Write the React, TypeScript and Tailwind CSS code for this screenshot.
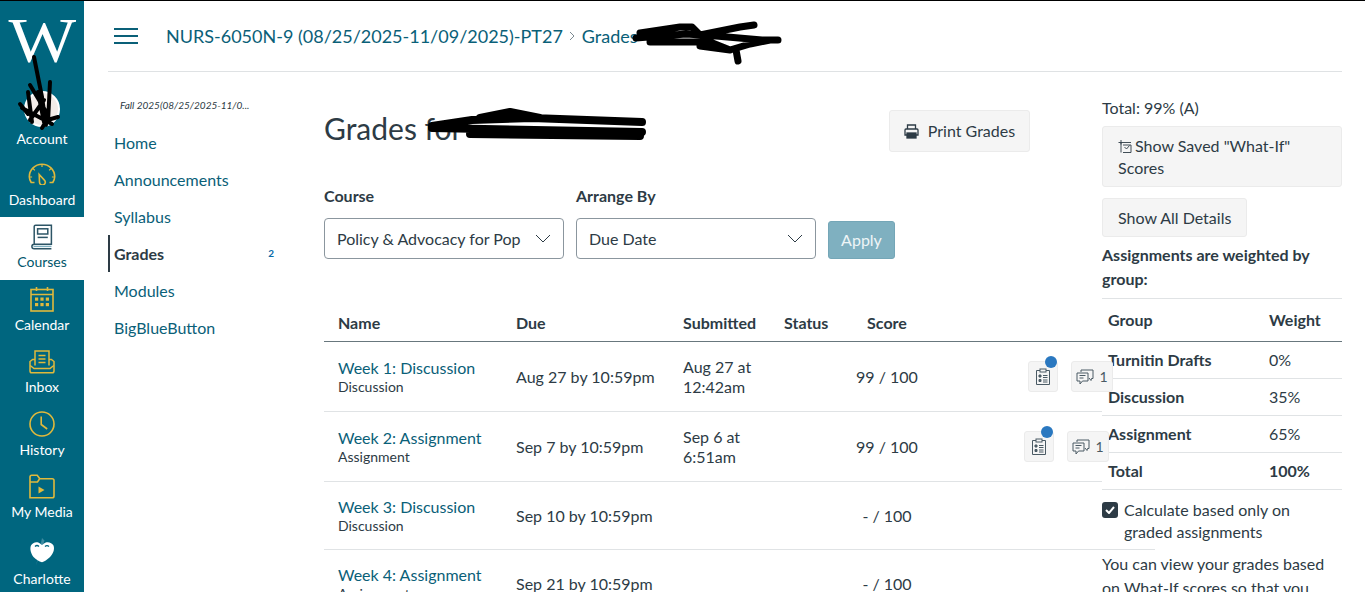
import type { ReactNode } from "react";

const gold = "#e0b93c";

function Gauge() {
  return (
    <svg width="28" height="22" viewBox="0 0 28 22" fill="none" stroke={gold} strokeWidth="1.6">
      <path d="M6.5 19.5H3.2C2 17.6 1.3 15.6 1.3 13.8 1.3 6.8 7 1.2 14 1.2s12.7 5.6 12.7 12.6c0 1.8-.7 3.8-1.9 5.7h-3.3" />
      <path d="M11.2 11.5l5.2 5.6a2.9 2.9 0 1 1-4.9 2.2z" />
      <path d="M14 1.5v2.6M5 5.5l1.8 1.8M23 5.5l-1.8 1.8M1.5 14h2.6M26.5 14h-2.6" strokeWidth="1.2" />
    </svg>
  );
}

function Book() {
  return (
    <svg width="22" height="26" viewBox="0 0 22 26" fill="none" stroke="#2d5566" strokeWidth="1.5">
      <path d="M3.2 20.2V2.6c0-.8.6-1.4 1.4-1.4h15.8v19H3.2a2 2 0 0 0 0 4.6h17.2" />
      <rect x="6.6" y="4.8" width="10.2" height="5.2" />
      <path d="M6.6 13.4h10.2" />
      <path d="M2.5 22.4h18" stroke="#7fb0c0" strokeWidth="1.4" />
    </svg>
  );
}

function CalendarIcon() {
  return (
    <svg width="24" height="26" viewBox="0 0 24 26" fill="none" stroke={gold} strokeWidth="1.6">
      <rect x="1" y="3.5" width="22" height="21.5" />
      <path d="M1 8.5h22M6.5 1v4M17.5 1v4" />
      <g fill={gold} stroke="none">
        <rect x="5" y="11.5" width="3.2" height="3.2" />
        <rect x="10.4" y="11.5" width="3.2" height="3.2" />
        <rect x="15.8" y="11.5" width="3.2" height="3.2" />
        <rect x="5" y="17" width="3.2" height="3.2" />
        <rect x="10.4" y="17" width="3.2" height="3.2" />
        <rect x="15.8" y="17" width="3.2" height="3.2" />
      </g>
    </svg>
  );
}

function InboxIcon() {
  return (
    <svg width="26" height="24" viewBox="0 0 26 24" fill="none" stroke={gold} strokeWidth="1.5">
      <path d="M6 15.5V1h14v14.5" />
      <path d="M9.5 5.5h7M9.5 9h7M9.5 12.5h7" />
      <path d="M6 9.5H3.6L1 11.5v9.5c0 1 .8 1.8 1.8 1.8h20.4c1 0 1.8-.8 1.8-1.8v-9.5l-2.6-2H20" />
      <path d="M1.2 15.5l3.8 3h16l3.8-3" />
    </svg>
  );
}

function Clock() {
  return (
    <svg width="26" height="26" viewBox="0 0 26 26" fill="none" stroke={gold} strokeWidth="1.6">
      <circle cx="13" cy="13" r="12" />
      <path d="M12.2 5.5v8l6 4.5" />
    </svg>
  );
}

function Folder() {
  return (
    <svg width="26" height="25" viewBox="0 0 26 25" fill="none" stroke={gold} strokeWidth="1.6">
      <path d="M1 23.8V3c0-1 .7-1.8 1.7-1.8h5.5l2.6 3.6h12.4c1 0 1.8.8 1.8 1.8v15.4c0 1-.8 1.8-1.8 1.8z" />
      <path d="M1 8h7.5l2-3" />
      <path d="M9.5 12.5l6 3.5-6 3.5z" fill={gold} stroke="none" />
    </svg>
  );
}

function Charlotte() {
  return (
    <svg width="26" height="30" viewBox="0 0 26 30">
      <path d="M13 1l2.5 2.5L7 28.5l1-4z" fill="#3d8aa0" />
      <path d="M2 8.5C3.5 5.5 8 4 11 6.5c1 .8 1.5 1.4 2 1.4s1-.6 2-1.4c3-2.5 8-1 9.5 2 1.5 4-.5 8.5-4 12-2.5 2.4-5 3.8-7.5 4.8-3-1-6-2.6-8.5-5.3C2 16.500.5 12 2 8.500z" fill="#fff" />
      <path d="M6 9.500q2-2 4 0M16 9.500q2-2 4 0" fill="none" stroke="#00667f" strokeWidth="1.2" />
    </svg>
  );
}

function Printer() {
  return (
    <svg width="15" height="15" viewBox="0 0 15 15" fill="none" stroke="#2d3b45" strokeWidth="1.3" className="shrink-0">
      <path d="M3.500 5V1h8v4" />
      <path d="M3 11H1V6c0-.6.400-1 1-1h11c.6 0 1 .400 1 1v5h-2" />
      <rect x="3" y="9" width="9" height="5" fill="#2d3b45" />
    </svg>
  );
}

function WhatIf() {
  return (
    <svg width="14" height="14" viewBox="0 0 14 14" fill="none" stroke="#2d3b45" strokeWidth="0.9" className="inline-block mr-[3px] -mt-[2px]">
      <path d="M3 1v4.500M0.500 3.500H13M3 3.500V13.500M5 6h8v7.500H5" />
      <path d="M6.500 8l2 2 3-3.500" />
    </svg>
  );
}

function Rubric() {
  return (
    <svg width="16" height="17" viewBox="0 0 16 17" fill="none" stroke="#4a5a64" strokeWidth="1">
      <path d="M5 2.500H1.500v14h13v-14H11" />
      <rect x="5" y="1" width="6" height="3" />
      <path d="M4 7h2v2H4zM4 11.500h2v2H4z" fill="#4a5a64" />
      <path d="M8 7.500h4.500M8 9.500h4.500M8 12h4.500M8 14h4.500" />
    </svg>
  );
}

function Comment() {
  return (
    <svg width="18" height="16" viewBox="0 0 18 16" fill="none" stroke="#4a5a64" strokeWidth="1">
      <path d="M5 3V1h12v8.500h-1.500l-.5 2-2-2.500" />
      <path d="M1 4h11v8H6.500l-2.500 3v-3H1z" />
      <path d="M3.500 6.500h6M3.500 9h4" />
    </svg>
  );
}

function Chevron() {
  return (
    <svg width="16" height="9" viewBox="0 0 16 9" fill="none" stroke="#2d3b45" strokeWidth="1" className="shrink-0">
      <path d="M1 1l7 7 7-7" />
    </svg>
  );
}

const navItems: { label: string; icon: ReactNode; active?: boolean; last?: boolean }[] = [
  { label: "Dashboard", icon: <Gauge /> },
  { label: "Courses", icon: <Book />, active: true },
  { label: "Calendar", icon: <CalendarIcon /> },
  { label: "Inbox", icon: <InboxIcon /> },
  { label: "History", icon: <Clock /> },
  { label: "My Media", icon: <Folder /> },
  { label: "Charlotte", icon: <Charlotte />, last: true },
];

const courseLinks = ["Home", "Announcements", "Syllabus", "Grades", "Modules", "BigBlueButton"];

const rows = [
  { title: "Week 1: Discussion", kind: "Discussion", due: "Aug 27 by 10:59pm", sub: ["Aug 27 at", "12:42am"], score: "99 / 100", height: "h-[70px]", icons: "pl-[86px]" },
  { title: "Week 2: Assignment", kind: "Assignment", due: "Sep 7 by 10:59pm", sub: ["Sep 6 at", "6:51am"], score: "99 / 100", height: "h-[70px]", icons: "pl-[82px]" },
  { title: "Week 3: Discussion", kind: "Discussion", due: "Sep 10 by 10:59pm", sub: [], score: "- / 100", height: "h-[68px]", icons: "" },
  { title: "Week 4: Assignment", kind: "Assignment", due: "Sep 21 by 10:59pm", sub: [], score: "- / 100", height: "h-[68px]", icons: "" },
];

const groups = [
  { name: "Turnitin Drafts", weight: "0%" },
  { name: "Discussion", weight: "35%" },
  { name: "Assignment", weight: "65%" },
];

function Sidebar() {
  return (
    <nav className="w-[84px] shrink-0 bg-[#00667f] text-white flex flex-col overflow-hidden">
      <div className="h-[89px] flex justify-center">
        <span className="font-['Liberation_Serif',serif] text-[64px] leading-[79px] scale-x-[1.12] origin-center">W</span>
      </div>
      <div className="h-[69px] flex flex-col items-center">
        <div className="w-9 h-9 mt-[4px] rounded-full bg-[#f3ece8] border-2 border-white" />
        <span className="text-sm leading-5 mt-[2px]">Account</span>
      </div>
      {navItems.map((item) => (
        <div
          key={item.label}
          className={`h-[62.5px] shrink-0 flex flex-col items-center pt-[6px] ${item.active ? "bg-white text-[#00566b]" : ""}`}
        >
          <div className={`h-[27px] flex items-center justify-center ${item.last ? "mt-[3px]" : ""}`}>{item.icon}</div>
          <span className={`text-sm leading-5 mt-[2px] ${item.last ? "pt-[1px]" : ""}`}>{item.label}</span>
        </div>
      ))}
    </nav>
  );
}

function CourseMenu() {
  return (
    <aside className="w-[216px] shrink-0">
      <p className="pl-3 mt-[24px] text-[10px] leading-[18px] italic text-[#2d3b45]">Fall 2025(08/25/2025-11/0...</p>
      <ul className="mt-[10px]">
        {courseLinks.map((link) =>
          link === "Grades" ? (
            <li key={link} className="h-[37px] border-l-2 border-[#2d3b45] pl-1 pr-[50px] flex items-center justify-between font-bold text-[#2d3b45]">
              <span>{link}</span>
              <span className="text-[10px] text-[#0a6ca8]">2</span>
            </li>
          ) : (
            <li key={link} className="h-[37px] pl-1.5 flex items-center text-[#0a6078]">
              {link}
            </li>
          ),
        )}
      </ul>
    </aside>
  );
}

function GradesTable() {
  return (
    <div className="mt-[45px]">
      <div className="h-[38px] grid grid-cols-[178px_167px_101px_62px_110px] items-center font-bold text-[#2d3b45] border-b border-[#68777d]">
        <span className="pl-3.5">Name</span>
        <span className="pl-3.5">Due</span>
        <span className="pl-3.5">Submitted</span>
        <span className="pl-3.5">Status</span>
        <span className="text-center">Score</span>
      </div>
      {rows.map((row) => (
        <div key={row.title} className={`${row.height} grid grid-cols-[178px_167px_101px_62px_110px_1fr] items-center border-b border-[#e0e3e5] text-[#2d3b45]`}>
          <div className="pl-3.5">
            <div className="leading-5 text-[#0a6078]">{row.title}</div>
            <div className="text-sm leading-[18px]">{row.kind}</div>
          </div>
          <span className="pl-3.5">{row.due}</span>
          <div className="pl-3.5 leading-5">
            {row.sub.map((line) => (
              <div key={line}>{line}</div>
            ))}
          </div>
          <span />
          <span className="text-center">{row.score}</span>
          {row.icons && (
            <div className={`${row.icons} flex gap-[13px] relative z-20`}>
              <div className="relative w-[30px] h-[31px] bg-[#f5f5f5] border border-[#ebebeb] rounded-[3px] flex items-center justify-center">
                <Rubric />
                <span className="absolute -top-[6px] right-0 w-3 h-3 rounded-full bg-[#2a78c0]" />
              </div>
              <div className="w-[42px] h-[31px] bg-[#f5f5f5] border border-[#ebebeb] rounded-[3px] flex items-center justify-center gap-[5px] text-sm text-[#4a5a64]">
                <Comment />
                <span>1</span>
              </div>
            </div>
          )}
        </div>
      ))}
    </div>
  );
}

function RightPanel() {
  return (
    <aside className="w-[240px] shrink-0 -ml-[53px] pt-6 text-[#2d3b45]">
      <p className="leading-6">Total: 99% (A)</p>
      <button className="mt-[6px] w-full h-[61px] px-[15px] text-left leading-[22px] bg-[#f5f5f5] border border-[#ebebeb] rounded-[3px]">
        <WhatIf />
        Show Saved "What-If" Scores
      </button>
      <button className="mt-[11px] block h-[39px] px-[15px] bg-[#f5f5f5] border border-[#ebebeb] rounded-[3px]">Show All Details</button>
      <p className="mt-[6px] font-bold leading-6">Assignments are weighted by group:</p>
      <div className="relative z-10 bg-white mt-[7px]">
        <div className="h-[43px] grid grid-cols-[161px_1fr] items-center font-bold border-t border-[#e0e3e5] border-b-0 pl-1.5">
          <span>Group</span>
          <span>Weight</span>
        </div>
        <div className="h-px bg-[#68777d]" />
        {groups.map((group) => (
          <div key={group.name} className="h-[37px] grid grid-cols-[161px_1fr] items-center border-b border-[#e0e3e5] pl-1.5">
            <span className="font-bold">{group.name}</span>
            <span>{group.weight}</span>
          </div>
        ))}
        <div className="h-[37px] grid grid-cols-[161px_1fr] items-center border-b border-[#e0e3e5] pl-1.5 font-bold">
          <span>Total</span>
          <span>100%</span>
        </div>
        <div className="flex gap-[6px] pt-[9px] pb-[3px]">
          <span className="w-4 h-4 mt-[3px] shrink-0 rounded-[3px] bg-[#2d3b45] flex items-center justify-center">
            <svg width="10" height="8" viewBox="0 0 10 8" fill="none" stroke="#fff" strokeWidth="2">
              <path d="M1 4l3 3 5-6" />
            </svg>
          </span>
          <span className="leading-[22px]">Calculate based only on graded assignments</span>
        </div>
      </div>
      <p className="mt-[6px] leading-6">You can view your grades based on What-If scores so that you know how grading changes will affect your grade.</p>
    </aside>
  );
}

export default function App() {
  return (
    <div className="relative h-[592px] overflow-hidden bg-white font-['Lato',sans-serif] text-base flex flex-col">
      <div className="h-px shrink-0 bg-black" />
      <div className="flex flex-1 min-h-0">
        <Sidebar />
        <div className="ml-6 w-[1234px]">
          <header className="h-[71px] border-b border-[#dfe2e4] flex items-center">
            <div className="ml-1.5 w-6 flex flex-col gap-[5px]">
              <span className="h-[2px] bg-[#0a6078]" />
              <span className="h-[2px] bg-[#0a6078]" />
              <span className="h-[2px] bg-[#0a6078]" />
            </div>
            <div className="ml-7 flex items-center text-lg text-[#0a6078]">
              <span>NURS-6050N-9 (08/25/2025-11/09/2025)-PT27</span>
              <svg width="7" height="10" viewBox="0 0 7 10" fill="none" stroke="#7c8a92" className="mx-[6px]">
                <path d="M1 1l4 4-4 4" />
              </svg>
              <span>Grades</span>
            </div>
          </header>
          <div className="flex">
            <CourseMenu />
            <main className="w-[831px] shrink-0 pt-[38px]">
              <div className="w-[706px] flex justify-between items-start">
                <h1 className="text-[30px] leading-9 text-[#2d3b45]">Grades for</h1>
                <button className="h-[42px] w-[141px] bg-[#f5f5f5] border border-[#ebebeb] rounded-[3px] flex items-center justify-center gap-[9px] text-[#2d3b45]">
                  <Printer />
                  Print Grades
                </button>
              </div>
              <div className="mt-[34px] flex gap-3 items-end text-[#2d3b45]">
                <div className="w-[240px]">
                  <div className="font-bold leading-5 mb-3">Course</div>
                  <div className="h-[41px] px-3 border border-[#8b969e] rounded-[4px] flex items-center justify-between">
                    <span>Policy &amp; Advocacy for Pop</span>
                    <Chevron />
                  </div>
                </div>
                <div className="w-[240px]">
                  <div className="font-bold leading-5 mb-3">Arrange By</div>
                  <div className="h-[41px] px-3 border border-[#8b969e] rounded-[4px] flex items-center justify-between">
                    <span>Due Date</span>
                    <Chevron />
                  </div>
                </div>
                <button className="h-[38px] w-[67px] bg-[#7fb0c0] border border-[#74a6b7] rounded-[3px] text-[#eef5f7]">Apply</button>
              </div>
              <GradesTable />
            </main>
            <RightPanel />
          </div>
        </div>
      </div>

      {/* redaction scribbles over the picture */}
      <svg className="absolute left-0 top-0 z-30 pointer-events-none" width="1365" height="592" viewBox="0 0 1365 592" fill="none" stroke="#000" strokeLinecap="round" strokeLinejoin="round">
        <path d="M636 38l50-4 30 2 46 4 16 0M640 33l40-6 12 0 8 8 40-8 14-2M650 42l60 0 20 8 20-6 20-4M700 46l30 4M736 50l2 11" strokeWidth="7" />
        <path d="M432 126l40-6 60-2 110 4M432 128l210 4M470 134l170 2M480 118l30-6 30 6" strokeWidth="8" />
        <path d="M34 57l8 40 4 28M30 85l18 30M50 82l-2 40M22 108l30 16M20 104l8 10M28 92l4 30M38 92l6 30M44 100l-14 20M42 128l6-10M58 117l-14 4" strokeWidth="4" />
      </svg>
    </div>
  );
}
